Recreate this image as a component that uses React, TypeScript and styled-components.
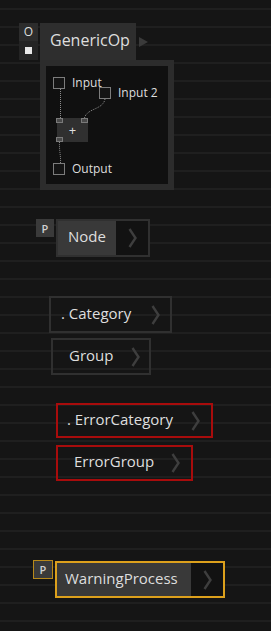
import React from "react";
import styled, { createGlobalStyle } from "styled-components";

const GlobalStyle = createGlobalStyle`
  html, body {
    margin: 0;
    padding: 0;
    background: #151515;
  }
  #root {
    width: 271px;
    height: 631px;
  }
`;

const Canvas = styled.div`
  position: relative;
  width: 271px;
  height: 631px;
  overflow: hidden;
  background-color: #151515;
  background-image: repeating-linear-gradient(
    to bottom,
    transparent 0 8px,
    #1f1f1f 8px 10px,
    transparent 10px 18px
  );
  font-family: "Open Sans", "Liberation Sans", sans-serif;
  color: #dedede;
`;

// nodes sit on a free canvas, so each one is placed by its graph coords
const Placed = styled.div<{ $x: number; $y: number }>`
  position: absolute;
  left: ${(p) => p.$x}px;
  top: ${(p) => p.$y}px;
  display: flex;
  align-items: flex-start;
  gap: 2px;
`;

/* ---------- GenericOp ---------- */

const OpBadge = styled.div`
  width: 19px;
  height: 37px;
  display: flex;
  flex-direction: column;
`;
const OpBadgeTop = styled.div`
  height: 18px;
  background: #2c2c2c;
  font-size: 12px;
  line-height: 18px;
  text-align: center;
`;
const OpBadgeBottom = styled.div`
  flex: 1;
  background: #242424;
  display: flex;
  align-items: center;
  justify-content: center;
`;
const WhiteSquare = styled.div`
  width: 7px;
  height: 7px;
  background: #e8e8e8;
`;
const OpBody = styled.div`
  display: flex;
  flex-direction: column;
`;
const OpHeaderRow = styled.div`
  display: flex;
  align-items: center;
  gap: 3px;
`;
const OpHeader = styled.div`
  width: 96px;
  height: 37px;
  box-sizing: border-box;
  padding-left: 10px;
  background: #2e2e2e;
  font-size: 16px;
  line-height: 35px;
  white-space: nowrap;
`;
const Triangle = styled.div`
  width: 0;
  height: 0;
  border-left: 9px solid #3a3a3a;
  border-top: 5px solid transparent;
  border-bottom: 5px solid transparent;
`;
const OpPanel = styled.div`
  position: relative;
  width: 134px;
  height: 130px;
  box-sizing: border-box;
  border: 6px solid #2c2c2c;
  background: #101010;
`;
const Wires = styled.svg`
  position: absolute;
  left: 0;
  top: 0;
`;
const PortRow = styled.div<{ $x: number; $y: number }>`
  position: absolute;
  left: ${(p) => p.$x}px;
  top: ${(p) => p.$y}px;
  display: flex;
  align-items: center;
  gap: 7px;
  font-size: 12px;
  line-height: 12px;
`;
const CheckBox = styled.div`
  width: 12px;
  height: 12px;
  box-sizing: border-box;
  border: 1px solid #7c7c7c;
  background: #141414;
`;
const MathBox = styled.div`
  position: absolute;
  left: 11px;
  top: 52px;
  width: 31px;
  height: 24px;
  background: #303030;
  display: flex;
  align-items: center;
  justify-content: center;
  font-size: 13px;
`;
const Pin = styled.div<{ $x: number; $y: number }>`
  position: absolute;
  left: ${(p) => p.$x}px;
  top: ${(p) => p.$y}px;
  width: 7px;
  height: 5px;
  box-sizing: border-box;
  border: 1px solid #7a7a7a;
  background: #4a4a4a;
`;

/* ---------- plain nodes ---------- */

const Badge = styled.div<{ $border?: string }>`
  width: ${(p) => (p.$border ? 20 : 18)}px;
  height: ${(p) => (p.$border ? 19 : 18)}px;
  box-sizing: border-box;
  border: ${(p) => (p.$border ? `1px solid ${p.$border}` : "none")};
  background: #3a3a3a;
  font-size: 11px;
  font-weight: 600;
  color: #d0d0d0;
  display: flex;
  align-items: center;
  justify-content: center;
`;
const Shell = styled.div<{ $border: string; $h: number; $drop?: boolean }>`
  display: flex;
  height: ${(p) => p.$h}px;
  margin-top: ${(p) => (p.$drop ? 1 : 0)}px;
  box-sizing: border-box;
  border: 2px solid ${(p) => p.$border};
`;
const Label = styled.div<{ $filled?: boolean; $l: number; $w: number }>`
  display: flex;
  align-items: center;
  width: ${(p) => p.$w}px;
  box-sizing: border-box;
  padding-left: ${(p) => p.$l}px;
  padding-bottom: 4px;
  background: ${(p) => (p.$filled ? "#393939" : "transparent")};
  font-size: 15px;
  white-space: nowrap;
`;
const ChevronCell = styled.div<{ $w: number; $filled?: boolean }>`
  width: ${(p) => p.$w}px;
  display: flex;
  align-items: center;
  justify-content: center;
  background: ${(p) => (p.$filled ? "#121212" : "transparent")};
`;

function Chevron() {
  return (
    <svg width="9" height="20" viewBox="0 0 9 20">
      <polyline
        points="1.5,1 7.5,10 1.5,19"
        fill="none"
        stroke="#3e3e3e"
        strokeWidth="2.4"
      />
    </svg>
  );
}

type NodeProps = {
  x: number;
  y: number;
  label: string;
  border: string;
  h: number;
  l: number;
  w: number;
  cell: number;
  filled?: boolean;
  badge?: string;
};

const nodes: NodeProps[] = [
  { x: 36, y: 219, label: "Node", border: "#303030", h: 38, l: 10, w: 58, cell: 32, filled: true, badge: "" },
  { x: 49, y: 296, label: ". Category", border: "#303030", h: 37, l: 10, w: 89, cell: 30 },
  { x: 51, y: 338, label: "Group", border: "#303030", h: 37, l: 16, w: 68, cell: 28 },
  { x: 56, y: 403, label: ". ErrorCategory", border: "#a80c0c", h: 35, l: 9, w: 121, cell: 32 },
  { x: 56, y: 445, label: "ErrorGroup", border: "#a80c0c", h: 36, l: 16, w: 101, cell: 32 },
  { x: 33, y: 560, label: "WarningProcess", border: "#dca01c", h: 37, l: 8, w: 134, cell: 32, filled: true, badge: "#b8891a" },
];

function GraphNode(n: NodeProps) {
  return (
    <Placed $x={n.x} $y={n.y}>
      {n.badge !== undefined && <Badge $border={n.badge || undefined}>P</Badge>}
      <Shell $border={n.border} $h={n.h} $drop={!!n.badge}>
        <Label $filled={n.filled} $l={n.l} $w={n.w}>
          {n.label}
        </Label>
        <ChevronCell $w={n.cell} $filled={n.filled}>
          <Chevron />
        </ChevronCell>
      </Shell>
    </Placed>
  );
}

export default function App() {
  return (
    <>
      <GlobalStyle />
      <Canvas>
        <Placed $x={19} $y={23}>
          <OpBadge>
            <OpBadgeTop>O</OpBadgeTop>
            <OpBadgeBottom>
              <WhiteSquare />
            </OpBadgeBottom>
          </OpBadge>
          <OpBody>
            <OpHeaderRow>
              <OpHeader>GenericOp</OpHeader>
              <Triangle />
            </OpHeaderRow>
            <OpPanel>
              <Wires width="122" height="118">
                <g fill="none" stroke="#8c8c8c" strokeWidth="1" strokeDasharray="1 1">
                  <path d="M14.5,23 L14.5,52" />
                  <path d="M59,33 C57,44 41,42 38.5,52" />
                  <path d="M13.5,76 C13,84 15,90 14.5,97" />
                </g>
              </Wires>
              <PortRow $x={7} $y={11}>
                <CheckBox />
                Input
              </PortRow>
              <PortRow $x={53} $y={21}>
                <CheckBox />
                Input 2
              </PortRow>
              <MathBox>+</MathBox>
              <Pin $x={10} $y={52} />
              <Pin $x={35} $y={52} />
              <Pin $x={10} $y={71} />
              <PortRow $x={7} $y={97}>
                <CheckBox />
                Output
              </PortRow>
            </OpPanel>
          </OpBody>
        </Placed>

        {nodes.map((n) => (
          <GraphNode key={n.label} {...n} />
        ))}
      </Canvas>
    </>
  );
}
